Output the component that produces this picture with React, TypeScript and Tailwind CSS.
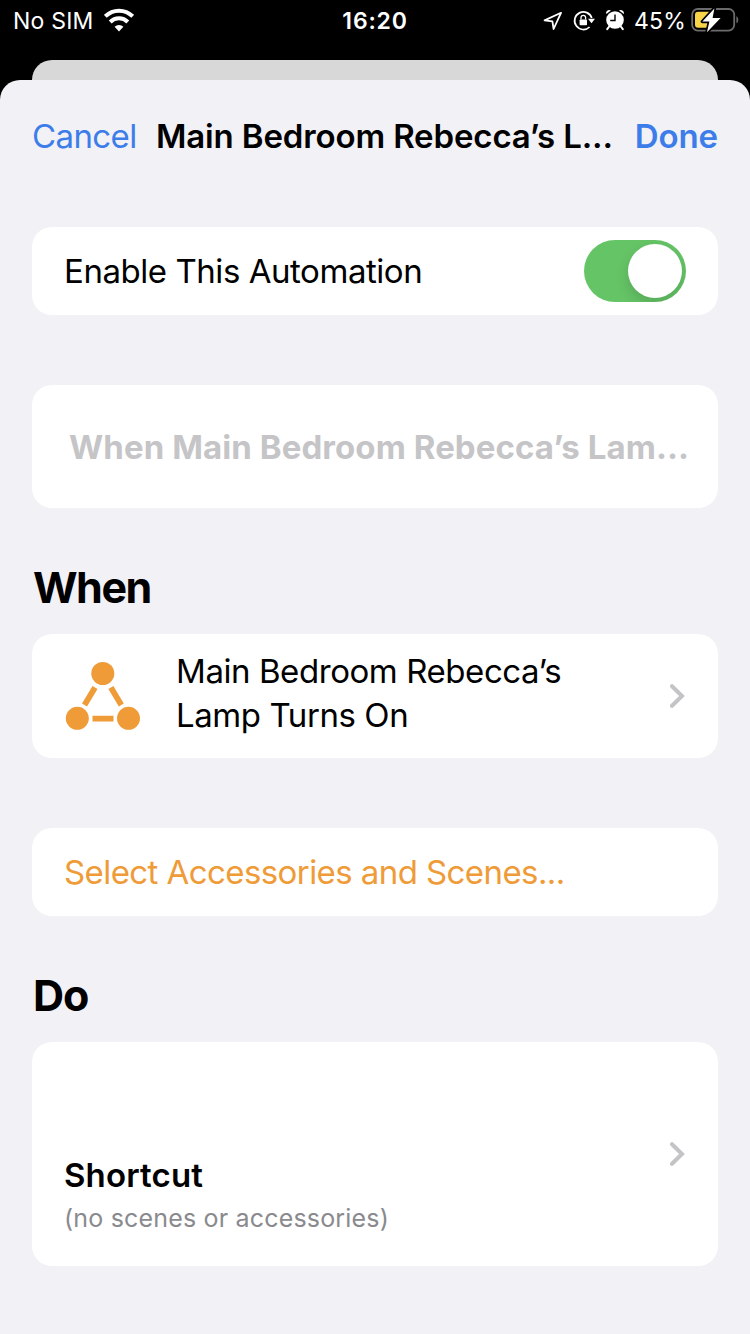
import type { ReactNode } from 'react';

function Card({ className, children }: { className: string; children: ReactNode }) {
  return <div className={`mx-8 flex shrink-0 items-center rounded-[20px] bg-white ${className}`}>{children}</div>;
}

function Chevron() {
  return (
    <svg className="h-6 w-4 shrink-0" viewBox="0 0 16 24" fill="none" stroke="#c4c4c6" strokeWidth="4" strokeLinecap="round" strokeLinejoin="miter">
      <path d="M2 2.2 12 12 2 21.8" />
    </svg>
  );
}

function WifiIcon() {
  return (
    <svg className="ml-[10px] h-6 w-[30px] shrink-0" viewBox="0 0 30 24" fill="none" stroke="#fff" strokeWidth="4">
      <path d="M1.3 8.4a19.3 19.3 0 0 1 27.4 0" />
      <path d="M6.2 14a12.4 12.4 0 0 1 17.6 0" />
      <path d="M15 23.4l-4.4-4.6a6.3 6.3 0 0 1 8.8 0Z" fill="#fff" stroke="none" />
    </svg>
  );
}

function LocationIcon() {
  return (
    <svg className="h-5 w-5" viewBox="0 0 20 20" fill="none" stroke="#fff" strokeWidth="1.8" strokeLinejoin="round">
      <path d="M18 2.8 1.6 10.4 9.4 11.4 10.6 19Z" />
    </svg>
  );
}

function RotationLockIcon() {
  return (
    <svg className="ml-[10px] h-[22px] w-[22px]" viewBox="0 0 22 22" fill="none">
      <path d="M18.8 9A8.8 8.8 0 1 0 16.6 18" stroke="#fff" strokeWidth="1.7" />
      <path d="M15 9.8h7l-3.5 4.4Z" fill="#fff" />
      <rect x="6.6" y="10.4" width="7.4" height="5.8" rx="0.8" fill="#fff" />
      <path d="M8 10.6V8.6a2.3 2.3 0 0 1 4.6 0v2" stroke="#fff" strokeWidth="1.3" />
    </svg>
  );
}

function AlarmIcon() {
  return (
    <svg className="ml-[10px] h-[22px] w-5" viewBox="0 0 20 22" fill="none">
      <circle cx="10" cy="11" r="8.8" fill="#fff" />
      <path d="M1.3 5.1C.2 2.4 3.3-.2 6 1.5ZM18.7 5.1c1.1-2.7-2-5.3-4.7-3.6Z" fill="#fff" />
      <path d="m4.2 17.5-2 2.6M15.8 17.5l2 2.6" stroke="#fff" strokeWidth="2" strokeLinecap="round" />
      <path d="M10 5.5v6H5.2" stroke="#000" strokeWidth="1.4" />
    </svg>
  );
}

function BatteryIcon() {
  return (
    <svg className="ml-[5px] h-[26px] w-12" viewBox="0 0 48 26" fill="none">
      <rect x="1.2" y="2" width="42" height="21.6" rx="5.6" stroke="#6b6b6b" strokeWidth="1.8" />
      <path d="M45.4 9.3c2.5 1 2.5 6 0 7Z" fill="#6b6b6b" />
      <rect x="4" y="4.8" width="17" height="16" rx="3" fill="#f8d448" />
      <path d="M23.4 1.4 11.4 14.6h7L16 25.2 29.6 11h-8Z" fill="#fff" stroke="#000" strokeWidth="3.4" paintOrder="stroke" strokeLinejoin="round" />
    </svg>
  );
}

function AutomationIcon() {
  return (
    <svg className="ml-px h-[72px] w-[76px] shrink-0" viewBox="0 0 76 72" fill="#ee9b38">
      <circle cx="37.8" cy="13.5" r="11.5" />
      <circle cx="12.3" cy="58.3" r="11.5" />
      <circle cx="63.5" cy="58.3" r="11.5" />
      <path d="M30 27.4 19.5 45M45.9 27.4l10.4 17.6M27.5 58.6h21" fill="none" stroke="#ee9b38" strokeWidth="5.8" />
    </svg>
  );
}

export default function App() {
  return (
    <div className="flex h-[1334px] w-[750px] flex-col overflow-hidden bg-black font-['Inter',sans-serif] whitespace-nowrap text-black">
      <header className="flex h-[60px] shrink-0 items-start text-[23px] leading-[42px] text-white">
        <div className="flex h-10 w-[250px] items-center pl-[13px]">
          <span className="pt-px tracking-[0.2px]">No SIM</span>
          <WifiIcon />
        </div>
        <div className="h-10 w-[250px] text-center font-semibold tracking-[0.8px]">16:20</div>
        <div className="flex h-10 w-[250px] items-center justify-end pr-[11px]">
          <LocationIcon />
          <RotationLockIcon />
          <AlarmIcon />
          <span className="ml-[9px] pt-px tracking-[0.2px]">45%</span>
          <BatteryIcon />
        </div>
      </header>
      <div className="mx-8 h-5 shrink-0 rounded-t-[20px] bg-[#d8d8d8]" />
      <main className="flex flex-1 flex-col rounded-t-[20px] bg-[#f1f1f6]">
        <nav className="flex h-[112px] items-center px-8 text-[33px] leading-[44px]">
          <button className="w-[124px] text-left tracking-[-0.6px] text-[#3d7de9]">Cancel</button>
          <h1 className="flex-1 font-semibold tracking-[-0.14px]">Main Bedroom Rebecca’s L...</h1>
          <button className="font-semibold tracking-[-0.1px] text-[#3d7de9]">Done</button>
        </nav>
        <Card className="mt-[35px] h-[88px] justify-between px-8">
          <span className="pt-0.5 text-[33px] tracking-[-0.45px]">Enable This Automation</span>
          <button role="switch" aria-checked="true" className="flex h-[62px] w-[102px] items-center justify-end overflow-hidden rounded-full bg-[#65c466] pr-1">
            <span className="h-[54px] w-[54px] rounded-full bg-white shadow-[0_6px_14px_rgba(0,0,0,0.14)]" />
          </button>
        </Card>
        <Card className="mt-[70px] h-[123px] pl-[37px]">
          <span className="pt-0.5 text-[33px] font-bold tracking-[0.08px] text-[#c5c5c7]">When Main Bedroom Rebecca’s Lam...</span>
        </Card>
        <h2 className="mt-[53px] h-[53px] pl-[33px] text-[43px] leading-[52px] font-bold tracking-[-1.5px]">When</h2>
        <Card className="mt-5 h-[124px] px-8">
          <AutomationIcon />
          <p className="ml-[35px] flex-1 pb-[7px] text-[33px] leading-[44px] tracking-[-0.43px]">Main Bedroom Rebecca’s<br />Lamp Turns On</p>
          <Chevron />
        </Card>
        <Card className="mt-[70px] h-[88px] px-8">
          <span className="pt-0.5 text-[33px] tracking-[-0.58px] text-[#ee9b38]">Select Accessories and Scenes...</span>
        </Card>
        <h2 className="mt-[53px] h-[53px] pl-[33px] text-[43px] leading-[52px] font-bold tracking-[-1px]">Do</h2>
        <Card className="mt-5 h-[224px] px-8">
          <div className="flex-1 pt-[81px]">
            <h3 className="text-[33px] leading-[44px] font-semibold tracking-[0.15px]">Shortcut</h3>
            <p className="mt-[3px] text-[25px] leading-[36px] tracking-[0.18px] text-[#8a8a8e]">(no scenes or accessories)</p>
          </div>
          <Chevron />
        </Card>
      </main>
    </div>
  );
}
